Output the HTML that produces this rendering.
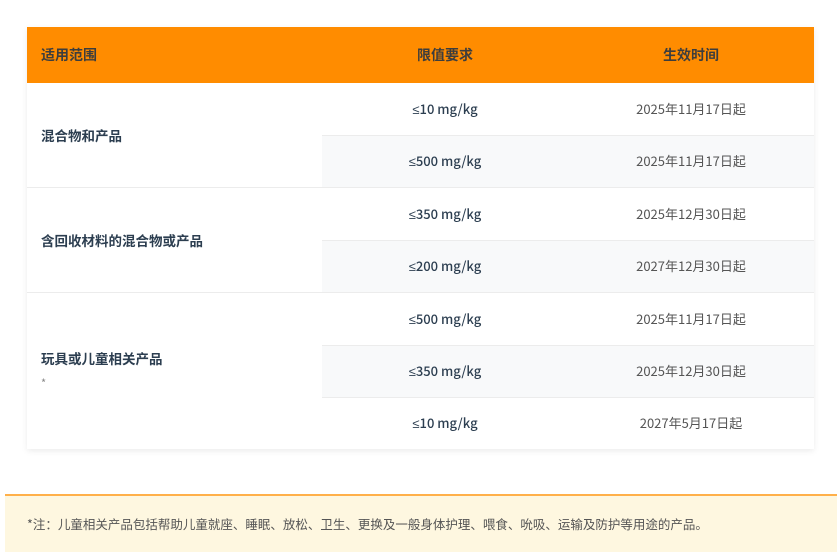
<!DOCTYPE html>
<html><head><meta charset="utf-8"><style>
*{margin:0;padding:0;box-sizing:border-box}
body{width:837px;height:552px;background:#fff;position:relative;overflow:hidden;font-family:"Noto Sans CJK SC","Liberation Sans",sans-serif}
.tbl{position:absolute;left:27px;top:27px;width:787px;height:422px;background:#fff;box-shadow:0 2px 6px rgba(0,0,0,0.08)}
.hd{position:absolute;left:0;top:0;width:787px;height:56px;background:#ff8c00}
.h{position:absolute;top:0;height:56px;line-height:56px;font-size:14px;font-weight:bold;color:#3d3d3d}
.c{position:absolute;height:52px;line-height:52px;font-size:13px;text-align:center}
.v{left:295px;width:246px;color:#2c3e50;font-weight:500}
.v i{font-style:normal;font-family:"Liberation Sans",sans-serif}
.d{left:541px;width:246px;color:#555}
.alt{background:#f8f9fa}
.ln{position:absolute;height:1px;background:#ececec}
.cat{position:absolute;left:14px;font-size:13.5px;font-weight:bold;color:#2c3e50;line-height:20px}
.note{position:absolute;left:5px;top:494px;width:832px;height:58px;background:#fef7e0;border-top:2px solid #ffb04a}
.note p{position:absolute;left:22px;top:18px;font-size:12.5px;color:#555;line-height:20px;white-space:nowrap}
</style></head><body>
<div class="tbl">
<div class="hd"></div>
<div class="h" style="left:14px">适用范围</div>
<div class="h" style="left:295px;width:246px;text-align:center">限值要求</div>
<div class="h" style="left:541px;width:246px;text-align:center">生效时间</div>

<div class="c alt" style="left:295px;width:492px;top:108px"></div>
<div class="c alt" style="left:295px;width:492px;top:213px"></div>
<div class="c alt" style="left:295px;width:492px;top:318px"></div>

<div class="ln" style="left:295px;width:492px;top:108px"></div>
<div class="ln" style="left:0;width:787px;top:160px"></div>
<div class="ln" style="left:295px;width:492px;top:213px"></div>
<div class="ln" style="left:0;width:787px;top:265px"></div>
<div class="ln" style="left:295px;width:492px;top:318px"></div>
<div class="ln" style="left:295px;width:492px;top:370px"></div>

<div class="c v" style="top:56px"><i>≤</i>10 mg/kg</div><div class="c d" style="top:56px">2025年11月17日起</div>
<div class="c v" style="top:108px"><i>≤</i>500 mg/kg</div><div class="c d" style="top:108px">2025年11月17日起</div>
<div class="c v" style="top:161px"><i>≤</i>350 mg/kg</div><div class="c d" style="top:161px">2025年12月30日起</div>
<div class="c v" style="top:213px"><i>≤</i>200 mg/kg</div><div class="c d" style="top:213px">2027年12月30日起</div>
<div class="c v" style="top:266px"><i>≤</i>500 mg/kg</div><div class="c d" style="top:266px">2025年11月17日起</div>
<div class="c v" style="top:318px"><i>≤</i>350 mg/kg</div><div class="c d" style="top:318px">2025年12月30日起</div>
<div class="c v" style="top:370px"><i>≤</i>10 mg/kg</div><div class="c d" style="top:370px">2027年5月17日起</div>

<div class="cat" style="top:98px">混合物和产品</div>
<div class="cat" style="top:203px">含回收材料的混合物或产品</div>
<div class="cat" style="top:321px">玩具或儿童相关产品</div>
<div style="position:absolute;left:14px;top:348px;font-size:11px;color:#888">*</div>
</div>
<div class="note"><p>*注：儿童相关产品包括帮助儿童就座、睡眠、放松、卫生、更换及一般身体护理、喂食、吮吸、运输及防护等用途的产品。</p></div>
</body></html>
